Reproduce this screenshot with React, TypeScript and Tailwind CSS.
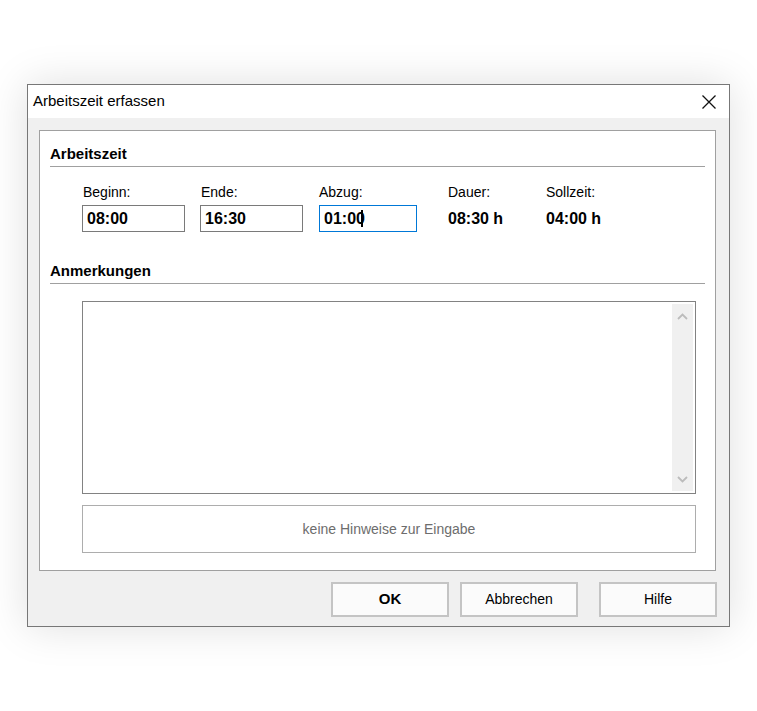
import React from "react";

// Windows-style "Arbeitszeit erfassen" dialog
const FIELDS = [
  { label: "Beginn:", value: "08:00", col: "w-[118px]" },
  { label: "Ende:", value: "16:30", col: "w-[119px]" },
];

function SectionHeader({ title, className }: { title: string; className?: string }) {
  return (
    <div className={className}>
      <div className="h-[20px] text-[15px] font-bold leading-[20px]">{title}</div>
      <div className="mt-[2px] h-px bg-[#a0a0a0]" />
    </div>
  );
}

function Chevron({ up }: { up?: boolean }) {
  return (
    <svg width="11" height="7" viewBox="0 0 11 7" fill="none">
      <path
        d={up ? "M1 6 L5.5 1.5 L10 6" : "M1 1 L5.5 5.5 L10 1"}
        stroke="#bcbcbc"
        strokeWidth="1.8"
      />
    </svg>
  );
}

function DialogButton({ label, bold, className }: { label: string; bold?: boolean; className?: string }) {
  return (
    <button
      className={`h-[35px] w-[118px] border-2 border-[#c4c4c4] bg-[#fbfbfb] text-[14px] text-black ${bold ? "font-bold text-[15px]" : ""} ${className ?? ""}`}
    >
      {label}
    </button>
  );
}

export default function App() {
  return (
    <div className="h-[711px] w-[757px] bg-white pl-[27px] pt-[84px] font-['Liberation_Sans',Arial,sans-serif] text-black">
      <div className="flex h-[543px] w-[703px] flex-col border border-[#777777] shadow-[0_0_40px_rgba(0,0,0,0.13)]">
        {/* title bar */}
        <div className="flex h-[33px] items-center justify-between bg-white pl-[5px] pr-[13px]">
          <span className="text-[15px]">Arbeitszeit erfassen</span>
          <svg width="14" height="14" viewBox="0 0 14 14">
            <path d="M0.5 0.5 L13.5 13.5 M13.5 0.5 L0.5 13.5" stroke="#111" strokeWidth="1.3" />
          </svg>
        </div>

        {/* body */}
        <div className="flex flex-1 flex-col bg-[#f0f0f0] pl-[11px] pt-[12px]">
          <div className="h-[441px] w-[677px] border border-[#a0a0a0] bg-white px-[10px] pt-[13px]">
            <SectionHeader title="Arbeitszeit" />

            <div className="ml-[32px] mt-[17px] flex">
              {FIELDS.map((f) => (
                <div key={f.label} className={f.col}>
                  <div className="h-[16px] pl-[1px] text-[14px] leading-[16px]">{f.label}</div>
                  <div className="mt-[5px] flex h-[27px] w-[103px] items-center border border-[#7a7a7a] bg-white px-[4px] text-[16px] font-bold">
                    {f.value}
                  </div>
                </div>
              ))}
              <div className="w-[129px]">
                <div className="h-[16px] text-[14px] leading-[16px]">Abzug:</div>
                <div className="mt-[5px] flex h-[27px] w-[98px] items-center border border-[#0078d7] bg-white px-[4px] text-[16px] font-bold">
                  01:00
                  <span className="-ml-[4px] h-[17px] w-[2px] bg-black" />
                </div>
              </div>
              <div className="w-[98px]">
                <div className="h-[16px] text-[14px] leading-[16px]">Dauer:</div>
                <div className="mt-[5px] flex h-[27px] items-center text-[16px] font-bold">08:30 h</div>
              </div>
              <div>
                <div className="h-[16px] text-[14px] leading-[16px]">Sollzeit:</div>
                <div className="mt-[5px] flex h-[27px] items-center text-[16px] font-bold">04:00 h</div>
              </div>
            </div>

            <SectionHeader title="Anmerkungen" className="mt-[29px]" />

            <div className="ml-[32px] mt-[17px] flex h-[193px] w-[614px] border border-[#828282] bg-white py-[2px] pr-[2px]">
              <div className="flex-1" />
              <div className="flex w-[21px] flex-col items-center justify-between bg-[#f0f0f0] pb-[8px] pt-[9px]">
                <Chevron up />
                <Chevron />
              </div>
            </div>

            <div className="ml-[32px] mt-[11px] flex h-[48px] w-[614px] items-center justify-center border border-[#adadad] bg-white text-[14px] text-[#6d6d6d]">
              keine Hinweise zur Eingabe
            </div>
          </div>

          <div className="mt-[11px] flex justify-end pr-[12px]">
            <DialogButton label="OK" bold />
            <DialogButton label="Abbrechen" className="ml-[11px]" />
            <DialogButton label="Hilfe" className="ml-[21px]" />
          </div>
        </div>
      </div>
    </div>
  );
}
